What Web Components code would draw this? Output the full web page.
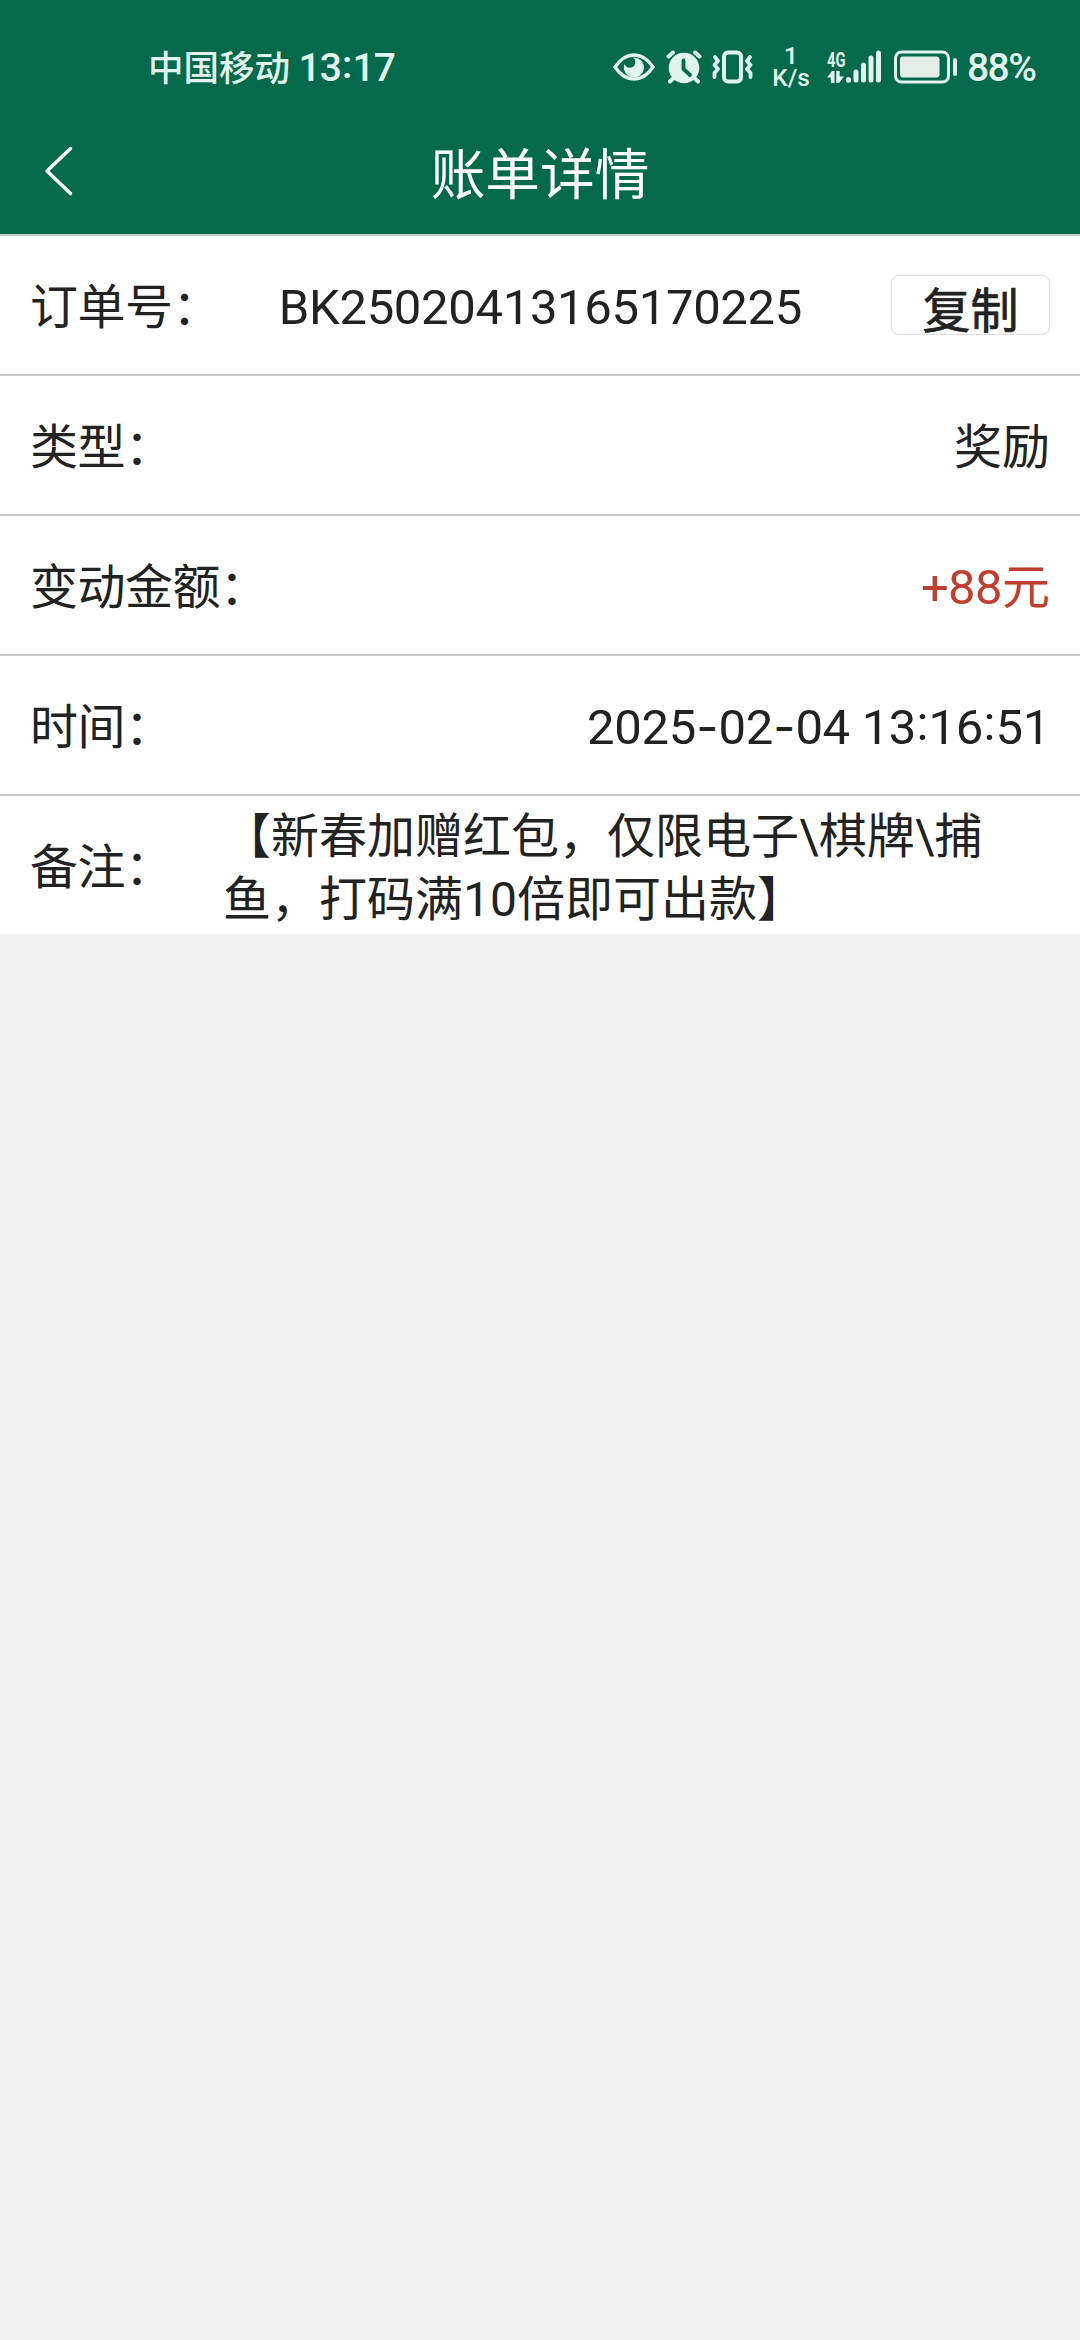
<!DOCTYPE html>
<html lang="zh-CN">
<head>
<meta charset="utf-8">
<title>账单详情</title>
<style>
body{margin:0;background:#f3f3f3;font-family:Roboto,"Noto Sans CJK SC",sans-serif;color:#222}
</style>
</head>
<body>
<bill-page></bill-page>
<script>
const define=(name,html)=>customElements.define(name,class extends HTMLElement{
  constructor(){super();this.attachShadow({mode:'open'}).innerHTML=html;}
});

define('status-bar',`<style>
:host{display:flex;align-items:center;height:134px;box-sizing:border-box;padding-left:148px;color:#e0f3ec;font-weight:500;white-space:nowrap}
.carrier{font-size:35.5px;line-height:50px;width:150.500px;padding-top:3px}
.time{font-size:39px;line-height:50px;width:314.500px;letter-spacing:-.9px;padding-top:2px}
.time i{font-style:normal;position:relative;top:-3px;margin:0 1px}
svg{display:block;fill:none;stroke:none}
.eye{margin-right:11px}.alarm{margin-right:10px}.vib{margin-right:18px}
.speed{width:38px;text-align:center;font-size:24.5px;line-height:22px;margin-right:17px}
.speed div{height:22px}
.net{display:flex;margin-right:12px}
.cell{width:19px;display:flex;flex-direction:column}
.gen{font:700 21px/20px Roboto;transform:scaleX(.7);transform-origin:0 50%;height:21px}
.bat{margin-right:9px}
.pct{font-size:39px;letter-spacing:-1.6px;padding-top:2px}
</style>
<span class="carrier">中国移动</span><span class="time">13<i>:</i>17</span>
<svg class="eye" width="42" height="34" viewBox="0 0 42 34"><path d="M2 17C8 8 14 5 21 5s13 3 19 12c-6 9-12 12-19 12S8 26 2 17Z" stroke="#e0f3ec" stroke-width="3.300"/><path d="M20 7.500A10 10 0 1 1 11.500 14c1.500 4 6 5 9 2.500 2.700-2.500 2.500-7-.5-9Z" fill="#e0f3ec"/></svg>
<svg class="alarm" width="36" height="34" viewBox="0 0 36 34"><circle cx="18" cy="18" r="15.300" fill="#e0f3ec"/><path d="M2.500 6.500 7 2.500M33.500 6.500 29 2.500M6.500 29 4 31.500M29.500 29 32 31.500" stroke="#e0f3ec" stroke-width="4" stroke-linecap="round"/><path d="M17.500 10.500v8.500l6.500 6" stroke="#05694b" stroke-width="3.800" stroke-linecap="round" stroke-linejoin="round"/></svg>
<svg class="vib" width="42" height="34" viewBox="0 0 42 34"><rect x="12" y="2.500" width="17" height="29" rx="4" stroke="#e0f3ec" stroke-width="4"/><path d="M3 7l3 4-3.500 4 3.500 4-3.500 4 0 4M38 7l-3 4 3.500 4-3.500 4 3.500 4 0 4" stroke="#e0f3ec" stroke-width="3.800" stroke-linecap="round" stroke-linejoin="round"/></svg>
<div class="speed"><div>1</div><div>K/s</div></div>
<div class="net"><div class="cell"><span class="gen">4G</span><svg width="18" height="13" viewBox="0 0 18 13"><path d="M0 6.500 5 0h2.500v12H3.800V6.500ZM9.200 0h3.500v5.500H17L12 12H9.200Z" fill="#e0f3ec"/></svg></div>
<svg width="36" height="34" viewBox="0 0 36 34"><path d="M2.500 29.500v.8M10 22v8M17.500 15v15M25 8v22M32.500 3v27" stroke="#e0f3ec" stroke-width="5" stroke-linecap="round"/></svg></div>
<svg class="bat" width="64" height="34" viewBox="0 0 64 34"><rect x="1.500" y="2" width="53" height="30" rx="6" stroke="#e0f3ec" stroke-width="3"/><rect x="6" y="6.500" width="39.500" height="21" rx="3" fill="#e4efea"/><rect x="59" y="8" width="4" height="18" rx="2" fill="#e0f3ec"/></svg>
<span class="pct">88%</span>`);

define('nav-bar',`<style>
:host{display:grid;grid-template-columns:120px 1fr 120px;align-items:center;height:100px;color:#fff}
svg{display:block;margin:-26px 0 0 44px}
h1{margin:-19px 0 0;text-align:center;font-weight:400;font-size:54.7px;line-height:80px}
</style>
<svg width="30" height="50" viewBox="0 0 30 50"><path d="M26.500 2.500 3 25l23.500 22.500" fill="none" stroke="#fff" stroke-width="3.500" stroke-linecap="round" stroke-linejoin="round"/></svg>
<h1><slot></slot></h1>`);

define('bill-row',`<style>
:host{display:flex;align-items:center;justify-content:space-between;height:140px;box-sizing:border-box;border-top:2px solid #c9c9c9;padding:5px 30px 0;background:#fefefe;font-size:48px;line-height:63px;text-spacing-trim:space-all}
:host(.first){border-top-color:#c3d1cc}
.label{white-space:nowrap;letter-spacing:-.5px}
.value{display:flex;align-items:center}
:host(.remark) .value{width:780px;margin-right:47px}
</style>
<span class="label"><slot name="label"></slot></span><div class="value"><slot></slot></div>`);

define('order-number',`<style>:host{display:block;font-size:49px;letter-spacing:-.33px;margin-right:89px}</style><slot></slot>`);
define('copy-button',`<style>:host{display:block}
button{display:flex;align-items:center;justify-content:center;width:159px;height:60px;box-sizing:border-box;padding:4px 0 0;margin:-6px 0 0;border:1px solid #ddd;border-radius:8px;background:#fefefe;color:#222;font:400 48px/52px "Noto Sans CJK SC",sans-serif;-webkit-text-stroke:.7px #222}
</style><button><slot></slot></button>`);
define('bill-amount',`<style>:host{display:block;color:#be3f30;white-space:nowrap}span{font-size:49px;letter-spacing:-.6px}</style><span>+88</span>元`);
define('bill-time',`<style>:host{display:block;font-size:49px;letter-spacing:-.33px;white-space:nowrap}
b{font:400 48px/1 Inter;margin:0 .4px}i{font-style:normal;position:relative;top:-4px;margin:0 .5px}</style>2025<b>-</b>02<b>-</b>04 13<i>:</i>16<i>:</i>51`);

define('bill-page',`<style>
:host{display:block;min-height:2340px;background:#f3f3f3}
header{background:#05694b;height:234px}
</style>
<header><status-bar></status-bar><nav-bar>账单详情</nav-bar></header>
<main>
<bill-row class="first"><span slot="label">订单号&#65306;</span><order-number>BK25020413165170225</order-number><copy-button>复制</copy-button></bill-row>
<bill-row><span slot="label">类型&#65306;</span>奖励</bill-row>
<bill-row><span slot="label">变动金额&#65306;</span><bill-amount></bill-amount></bill-row>
<bill-row><span slot="label">时间&#65306;</span><bill-time></bill-time></bill-row>
<bill-row class="remark"><span slot="label">备注&#65306;</span><span>【新春加赠红包&#65292;仅限电子\\棋牌\\捕鱼&#65292;打码满10倍即可出款】</span></bill-row>
</main>`);
</script>
</body>
</html>
